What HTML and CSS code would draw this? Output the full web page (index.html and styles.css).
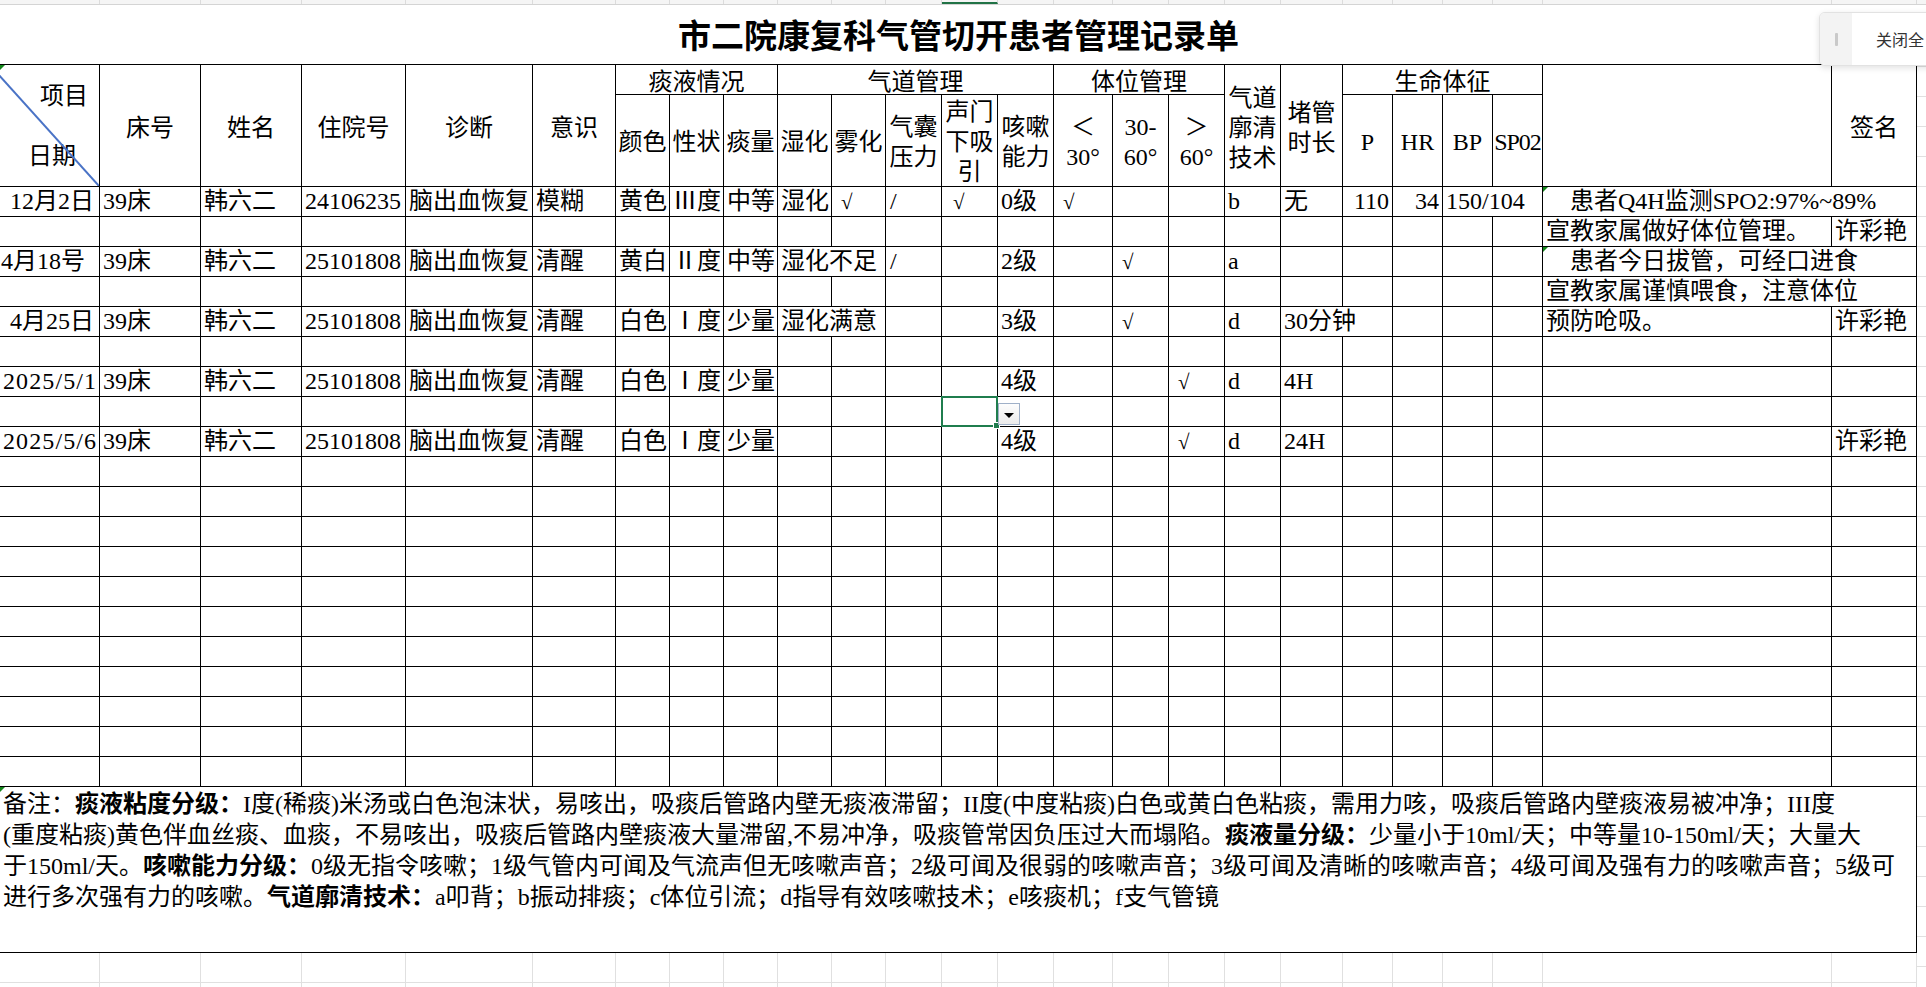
FILE: index.html
```html
<!DOCTYPE html>
<html lang="zh-CN">
<head>
<meta charset="utf-8">
<title>市二院康复科气管切开患者管理记录单</title>
<link rel="stylesheet" href="styles.css">
</head>
<body>
<div class="screen">
  <div class="sheet">
    <div class="colbar cols">
      <div></div><div></div><div></div><div></div><div></div><div></div><div></div><div></div><div></div><div></div><div></div><div></div><div class="act"></div><div></div><div></div><div></div><div></div><div></div><div></div><div></div><div></div><div></div><div></div><div></div><div></div>
    </div>
    <div class="title">市二院康复科气管切开患者管理记录单</div>
    <div class="grid cols">
      <!-- header row 1 -->
      <div class="corner r2 cm">
        <svg class="diag" width="99" height="121" viewBox="0 0 99 121"><line x1="-11" y1="-1" x2="99" y2="121" stroke="#4a73c6" stroke-width="2"/></svg>
        <div class="xm">项目</div>
        <div class="rq">日期</div>
      </div>
      <div class="h tall r2">床号</div>
      <div class="h tall r2">姓名</div>
      <div class="h tall r2">住院号</div>
      <div class="h tall r2">诊断</div>
      <div class="h tall r2">意识</div>
      <div class="grp s3">痰液情况</div>
      <div class="grp s5">气道管理</div>
      <div class="grp s3">体位管理</div>
      <div class="h tall r2">气道<br>廓清<br>技术</div>
      <div class="h tall r2">堵管<br>时长</div>
      <div class="grp s4">生命体征</div>
      <div class="h tall r2"></div>
      <div class="h tall r2">签名</div>
      <!-- header row 2 -->
      <div class="h sub">颜色</div>
      <div class="h sub">性状</div>
      <div class="h sub">痰量</div>
      <div class="h sub">湿化</div>
      <div class="h sub">雾化</div>
      <div class="h sub">气囊<br>压力</div>
      <div class="h sub">声门<br>下吸<br>引</div>
      <div class="h sub">咳嗽<br>能力</div>
      <div class="h sub">＜<br>30°</div>
      <div class="h sub">30-<br>60°</div>
      <div class="h sub">＞<br>60°</div>
      <div class="h sub">P</div>
      <div class="h sub">HR</div>
      <div class="h sub">BP</div>
      <div class="h sub sp">SP02</div>

      <!-- R1 -->
      <div class="r dt">12月2日</div>
      <div>39床</div>
      <div>韩六二</div>
      <div>24106235</div>
      <div>脑出血恢复</div>
      <div>模糊</div>
      <div>黄色</div>
      <div>Ⅲ度</div>
      <div>中等</div>
      <div>湿化</div>
      <div class="ckc"><span class="ck">√</span></div>
      <div class="sl">/</div>
      <div class="ckc2"><span class="ck">√</span></div>
      <div>0级</div>
      <div class="ckc"><span class="ck">√</span></div>
      <div></div>
      <div></div>
      <div>b</div>
      <div>无</div>
      <div class="r">110</div>
      <div class="r">34</div>
      <div class="s2">150/104</div>
      <div class="s2 cm">　患者Q4H监测SPO2:97%~89%</div>

      <!-- R2 -->
      <div></div><div></div><div></div><div></div><div></div><div></div><div></div><div></div><div></div><div></div><div></div><div></div><div></div><div></div><div></div><div></div><div></div><div></div><div></div><div></div><div></div><div></div><div></div>
      <div>宣教家属做好体位管理。</div>
      <div>许彩艳</div>

      <!-- R3 -->
      <div class="dl">4月18号</div>
      <div>39床</div>
      <div>韩六二</div>
      <div>25101808</div>
      <div>脑出血恢复</div>
      <div>清醒</div>
      <div>黄白</div>
      <div>Ⅱ度</div>
      <div>中等</div>
      <div class="s2">湿化不足</div>
      <div class="sl">/</div>
      <div></div>
      <div>2级</div>
      <div></div>
      <div class="ckc"><span class="ck">√</span></div>
      <div></div>
      <div>a</div>
      <div></div><div></div><div></div><div></div><div></div>
      <div class="s2 cm">　患者今日拔管，可经口进食</div>

      <!-- R4 -->
      <div></div><div></div><div></div><div></div><div></div><div></div><div></div><div></div><div></div><div></div><div></div><div></div><div></div><div></div><div></div><div></div><div></div><div></div><div></div><div></div><div></div><div></div><div></div>
      <div class="s2">宣教家属谨慎喂食，注意体位</div>

      <!-- R5 -->
      <div class="r dt">4月25日</div>
      <div>39床</div>
      <div>韩六二</div>
      <div>25101808</div>
      <div>脑出血恢复</div>
      <div>清醒</div>
      <div>白色</div>
      <div>Ⅰ度</div>
      <div>少量</div>
      <div class="s2">湿化满意</div>
      <div></div>
      <div></div>
      <div>3级</div>
      <div></div>
      <div class="ckc"><span class="ck">√</span></div>
      <div></div>
      <div>d</div>
      <div class="s2">30分钟</div>
      <div></div><div></div><div></div>
      <div>预防呛吸。</div>
      <div>许彩艳</div>

      <!-- R6 -->
      <div></div><div></div><div></div><div></div><div></div><div></div><div></div><div></div><div></div><div></div><div></div><div></div><div></div><div></div><div></div><div></div><div></div><div></div><div></div><div></div><div></div><div></div><div></div><div></div><div></div>

      <!-- R7 -->
      <div class="r dt dn">2025/5/1</div>
      <div>39床</div>
      <div>韩六二</div>
      <div>25101808</div>
      <div>脑出血恢复</div>
      <div>清醒</div>
      <div>白色</div>
      <div>Ⅰ度</div>
      <div>少量</div>
      <div></div><div></div><div></div><div></div>
      <div>4级</div>
      <div></div><div></div>
      <div class="ckc"><span class="ck">√</span></div>
      <div>d</div>
      <div>4H</div>
      <div></div><div></div><div></div><div></div><div></div><div></div>

      <!-- R8 -->
      <div></div><div></div><div></div><div></div><div></div><div></div><div></div><div></div><div></div><div></div><div></div><div></div>
      <div class="sel"><div class="selbox"><span class="handle"></span></div><div class="dd"></div></div>
      <div></div><div></div><div></div><div></div><div></div><div></div><div></div><div></div><div></div><div></div><div></div><div></div>

      <!-- R9 -->
      <div class="r dt dn">2025/5/6</div>
      <div>39床</div>
      <div>韩六二</div>
      <div>25101808</div>
      <div>脑出血恢复</div>
      <div>清醒</div>
      <div>白色</div>
      <div>Ⅰ度</div>
      <div>少量</div>
      <div></div><div></div><div></div><div></div>
      <div>4级</div>
      <div></div><div></div>
      <div class="ckc"><span class="ck">√</span></div>
      <div>d</div>
      <div>24H</div>
      <div></div><div></div><div></div><div></div><div></div>
      <div>许彩艳</div>

      <!-- R10 - R20 -->
      <div></div><div></div><div></div><div></div><div></div><div></div><div></div><div></div><div></div><div></div><div></div><div></div><div></div><div></div><div></div><div></div><div></div><div></div><div></div><div></div><div></div><div></div><div></div><div></div><div></div>
      <div></div><div></div><div></div><div></div><div></div><div></div><div></div><div></div><div></div><div></div><div></div><div></div><div></div><div></div><div></div><div></div><div></div><div></div><div></div><div></div><div></div><div></div><div></div><div></div><div></div>
      <div></div><div></div><div></div><div></div><div></div><div></div><div></div><div></div><div></div><div></div><div></div><div></div><div></div><div></div><div></div><div></div><div></div><div></div><div></div><div></div><div></div><div></div><div></div><div></div><div></div>
      <div></div><div></div><div></div><div></div><div></div><div></div><div></div><div></div><div></div><div></div><div></div><div></div><div></div><div></div><div></div><div></div><div></div><div></div><div></div><div></div><div></div><div></div><div></div><div></div><div></div>
      <div></div><div></div><div></div><div></div><div></div><div></div><div></div><div></div><div></div><div></div><div></div><div></div><div></div><div></div><div></div><div></div><div></div><div></div><div></div><div></div><div></div><div></div><div></div><div></div><div></div>
      <div></div><div></div><div></div><div></div><div></div><div></div><div></div><div></div><div></div><div></div><div></div><div></div><div></div><div></div><div></div><div></div><div></div><div></div><div></div><div></div><div></div><div></div><div></div><div></div><div></div>
      <div></div><div></div><div></div><div></div><div></div><div></div><div></div><div></div><div></div><div></div><div></div><div></div><div></div><div></div><div></div><div></div><div></div><div></div><div></div><div></div><div></div><div></div><div></div><div></div><div></div>
      <div></div><div></div><div></div><div></div><div></div><div></div><div></div><div></div><div></div><div></div><div></div><div></div><div></div><div></div><div></div><div></div><div></div><div></div><div></div><div></div><div></div><div></div><div></div><div></div><div></div>
      <div></div><div></div><div></div><div></div><div></div><div></div><div></div><div></div><div></div><div></div><div></div><div></div><div></div><div></div><div></div><div></div><div></div><div></div><div></div><div></div><div></div><div></div><div></div><div></div><div></div>
      <div></div><div></div><div></div><div></div><div></div><div></div><div></div><div></div><div></div><div></div><div></div><div></div><div></div><div></div><div></div><div></div><div></div><div></div><div></div><div></div><div></div><div></div><div></div><div></div><div></div>
      <div></div><div></div><div></div><div></div><div></div><div></div><div></div><div></div><div></div><div></div><div></div><div></div><div></div><div></div><div></div><div></div><div></div><div></div><div></div><div></div><div></div><div></div><div></div><div></div><div></div>

      <!-- remark -->
      <div class="remark cm">备注：<b>痰液粘度分级：</b>I度(稀痰)米汤或白色泡沫状，易咳出，吸痰后管路内壁无痰液滞留；II度(中度粘痰)白色或黄白色粘痰，需用力咳，吸痰后管路内壁痰液易被冲净；III度<br>(重度粘痰)黄色伴血丝痰、血痰，不易咳出，吸痰后管路内壁痰液大量滞留,不易冲净，吸痰管常因负压过大而塌陷。<b>痰液量分级：</b>少量小于10ml/天；中等量10-150ml/天；大量大<br>于150ml/天。<b>咳嗽能力分级：</b>0级无指令咳嗽；1级气管内可闻及气流声但无咳嗽声音；2级可闻及很弱的咳嗽声音；3级可闻及清晰的咳嗽声音；4级可闻及强有力的咳嗽声音；5级可<br>进行多次强有力的咳嗽。<b>气道廓清技术：</b>a叩背；b振动排痰；c体位引流；d指导有效咳嗽技术；e咳痰机；f支气管镜</div>
    </div>
    <div class="ghost cols">
      <div></div><div></div><div></div><div></div><div></div><div></div><div></div><div></div><div></div><div></div><div></div><div></div><div></div><div></div><div></div><div></div><div></div><div></div><div></div><div></div><div></div><div></div><div></div><div></div><div></div>
      <div></div><div></div><div></div><div></div><div></div><div></div><div></div><div></div><div></div><div></div><div></div><div></div><div></div><div></div><div></div><div></div><div></div><div></div><div></div><div></div><div></div><div></div><div></div><div></div><div></div>
    </div>
  </div>
  <div class="filler">
    <div class="fbar"></div>
    <div class="fbody"></div>
  </div>
</div>
<div class="popup">
  <div class="grip"><span></span></div>
  <div class="ptxt">关闭全</div>
</div>
</body>
</html>
```

FILE: styles.css
```css
html, body {
  margin: 0;
  padding: 0;
  width: 1926px;
  height: 987px;
  overflow: hidden;
  background: #fff;
}
body {
  font-family: "Liberation Serif", "Noto Sans CJK SC", serif;
  font-size: 24px;
  color: #000;
  position: relative;
}
.screen {
  display: flex;
  width: 1926px;
  height: 987px;
}
.sheet {
  width: 1917px;
  flex: none;
}
.cols {
  display: grid;
  grid-template-columns: 100px 101px 101px 104px 127px 83px 54px 54px 54px 54px 54px 56px 56px 56px 59px 56px 56px 56px 62px 50px 50px 50px 50px 289px 85px;
}

/* column header strip (cut off) */
.colbar {
  height: 5px;
  box-sizing: border-box;
  background: #f5f5f5;
  border-bottom: 1px solid #d4d4d4;
}
.colbar > div {
  border-right: 1px solid #dcdcdc;
  box-sizing: border-box;
}
.colbar > .act {
  border-bottom: 2px solid #217346;
}

.title {
  height: 59px;
  line-height: 59px;
  text-align: center;
  font-family: "Noto Sans CJK SC", sans-serif;
  font-weight: 700;
  font-size: 33px;
  white-space: nowrap;
}

/* main sheet grid */
.grid {
  grid-template-rows: 30px 92px repeat(20, 30px) 166px;
  border-top: 1px solid #000;
}
.grid > div {
  position: relative;
  box-sizing: border-box;
  border-right: 1px solid #000;
  border-bottom: 1px solid #000;
  padding: 0 3px;
  line-height: 29px;
  white-space: nowrap;
  overflow: hidden;
  min-width: 0;
}
.grid > div::after {
  content: "\3000";
  display: inline-block;
  width: 0;
}
.grid > .h::after,
.grid > .corner::after,
.grid > .remark::after,
.grid > .sel::after {
  content: none;
}

.r2 { grid-row: span 2; }
.s2 { grid-column: span 2; }
.s3 { grid-column: span 3; }
.s4 { grid-column: span 4; }
.s5 { grid-column: span 5; }

.grid > .h {
  display: flex;
  align-items: center;
  justify-content: center;
  text-align: center;
  line-height: 30px;
  padding: 0;
}
.grid > .h.tall { padding-top: 4px; }
.grid > .h.sub { padding-top: 2px; }
.grid > .h.sp { letter-spacing: -1px; }
.grid > .grp {
  text-align: center;
  padding: 3px 0 0;
  line-height: 29px;
  overflow: visible;
}

.grid > .corner {
  padding: 0;
}
.diag {
  position: absolute;
  left: 0;
  top: 0;
  display: block;
}
.xm {
  margin-top: 16px;
  line-height: 30px;
  text-align: right;
  padding-right: 11px;
}
.rq {
  margin-top: 30px;
  line-height: 30px;
  padding-left: 28px;
}

.grid > .r { text-align: right; }
.grid > .dt { padding-right: 5px; }
.grid > .dn { padding-right: 2px; letter-spacing: 1.1px; }
.grid > .dl { padding-left: 1px; }
.grid > .ckc { padding-left: 9px; }
.grid > .ckc2 { padding-left: 11px; }
.grid > .sl { padding-left: 4px; }
.ck {
  font-size: 21px;
}

/* comment markers */
.cm::before {
  content: "";
  position: absolute;
  left: 0;
  top: 0;
  border-top: 5px solid #13861b;
  border-right: 5px solid transparent;
  z-index: 1;
}

/* selected cell */
.grid > .sel {
  overflow: visible;
  z-index: 2;
}
.selbox {
  position: absolute;
  left: -1px;
  top: -1px;
  right: -1px;
  bottom: -1px;
  border: 2px solid #1f7d4e;
}
.handle {
  position: absolute;
  right: -4px;
  bottom: -4px;
  width: 5px;
  height: 5px;
  background: #1f7d4e;
  border: 1px solid #fff;
}
.dd {
  position: absolute;
  left: 56px;
  top: 6px;
  width: 22px;
  height: 22px;
  box-sizing: border-box;
  border: 1px solid #9fb0c8;
  background: linear-gradient(#fdfdfd, #ebebeb);
  display: flex;
  align-items: center;
  justify-content: center;
}
.dd::before {
  content: "";
  border-left: 5px solid transparent;
  border-right: 5px solid transparent;
  border-top: 5px solid #000;
  margin-top: 2px;
}

/* remark block */
.grid > .remark {
  grid-column: 1 / -1;
  line-height: 31px;
  padding: 2px 3px 0;
  white-space: nowrap;
}
.remark b {
  font-weight: 700;
}

/* gridlines below the sheet */
.ghost {
  grid-auto-rows: 30px;
}
.ghost > div {
  box-sizing: border-box;
  border-right: 1px solid #e0e0e0;
  border-bottom: 1px solid #e0e0e0;
}

/* area right of the sheet */
.filler {
  flex: 1;
  display: flex;
  flex-direction: column;
}
.fbar {
  height: 5px;
  box-sizing: border-box;
  background: #f5f5f5;
  border-bottom: 1px solid #d4d4d4;
}
.fbody {
  flex: 1;
  background: repeating-linear-gradient(to bottom, transparent 0, transparent 29px, #e0e0e0 29px, #e0e0e0 30px);
  background-position: 0 2px;
}

/* floating panel (top right) */
.popup {
  position: absolute;
  left: 1819px;
  top: 12px;
  width: 170px;
  height: 54px;
  box-sizing: border-box;
  border: 1px solid #e2e2e2;
  border-radius: 6px;
  background: #fff;
  box-shadow: 0 2px 6px rgba(0, 0, 0, 0.12);
  display: flex;
  z-index: 10;
  font-family: "Noto Sans CJK SC", sans-serif;
  font-size: 16px;
  color: #333;
  overflow: hidden;
}
.grip {
  width: 32px;
  flex: none;
  background: #f3f3f3;
  display: flex;
  align-items: center;
  justify-content: center;
}
.grip span {
  width: 3px;
  height: 13px;
  background: #c9c9c9;
  border-radius: 1px;
}
.ptxt {
  padding-left: 24px;
  line-height: 52px;
  white-space: nowrap;
}
```
